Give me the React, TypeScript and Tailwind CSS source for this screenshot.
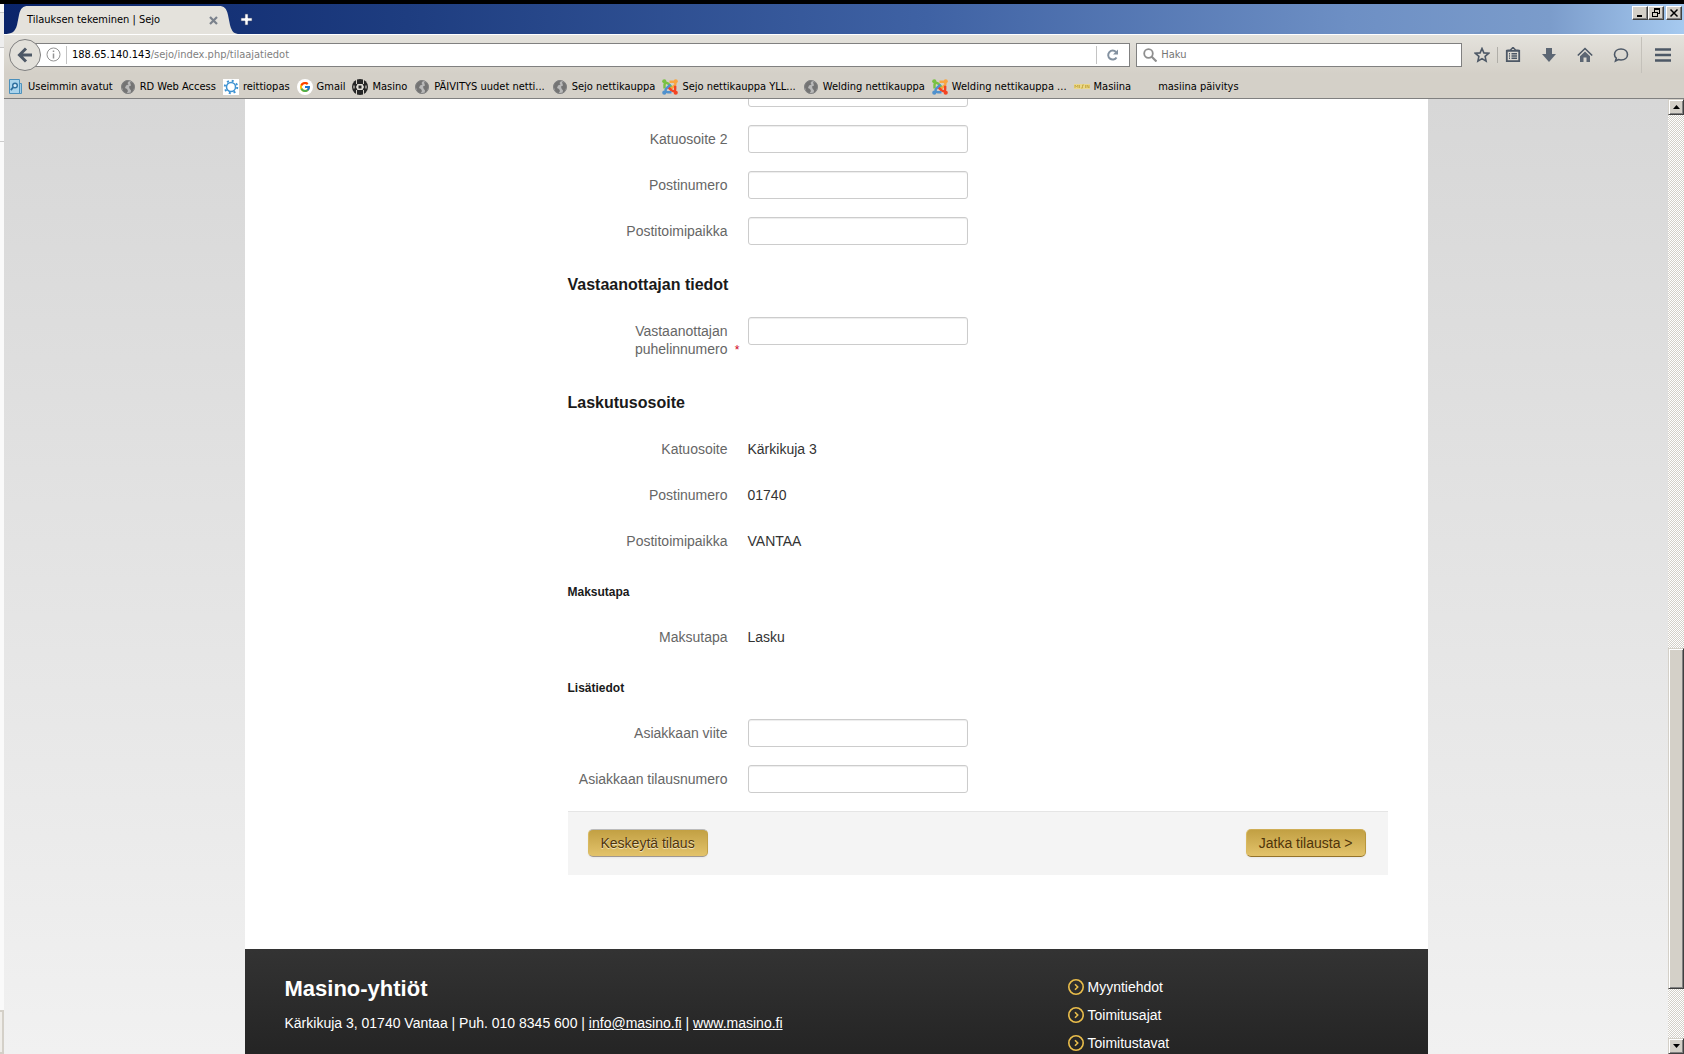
import type { ReactNode } from 'react';
import { FcGoogle } from 'react-icons/fc';

const uiFont = "font-['DejaVu_Sans_Condensed','Noto_Sans',sans-serif]";

function GlobeIcon() {
  return (
    <svg width="16" height="16" viewBox="0 0 16 16" aria-hidden="true">
      <circle cx="8" cy="8" r="7" fill="#b9b9b9" />
      <path d="M1.500 7 3 3.500 6.500 1.500 9 2 7.500 4l1 1.500L6 6.500 5 9l2 1 1 2-1.500 2.500L3.500 13 2.500 10zM10 3l3 .5 1.500 3-.5 3-1.500 3.500-2 1.500.5-3-1.500-2-.5-2L11 6.500z" fill="#747474" />
      <circle cx="8" cy="8" r="6.500" fill="none" stroke="#808080" />
    </svg>
  );
}

function JoomlaIcon() {
  return (
    <svg width="16" height="16" viewBox="0 0 16 16" fill="none" strokeWidth="2.400" aria-hidden="true">
      <path d="M2.500 9.500V5.800c0-1.800 2.300-2.500 3.700-1.200L10.500 9" stroke="#7ac143" />
      <path d="M7.500 2.800h3.700c1.800 0 3 2 1.800 3.300l-4.700 4.400" stroke="#f9a541" />
      <path d="M13.200 6.800v3.400c0 1.900-2.300 2.600-3.700 1.200L5.500 7.300" stroke="#f44321" />
      <path d="M9.500 13.200H5.800C4 13.200 2.800 11.200 4 9.900l4.500-4.400" stroke="#5091cd" />
      <circle cx="2.300" cy="2.300" r="2.100" fill="#7ac143" />
      <circle cx="13.700" cy="2.300" r="2.100" fill="#f9a541" />
      <circle cx="13.700" cy="13.700" r="2.100" fill="#f44321" />
      <circle cx="2.300" cy="13.700" r="2.100" fill="#5091cd" />
    </svg>
  );
}

function MostVisitedIcon() {
  return (
    <svg width="16" height="16" viewBox="0 0 16 16" aria-hidden="true">
      <path d="M4 4.500h9.500v10H3z" fill="#9fcbe6" stroke="#4f93bd" />
      <path d="M1.500.5h10v14h-10z" fill="#a9d3ec" stroke="#4a8fbb" />
      <circle cx="7" cy="6.500" r="2.300" fill="#d9eefa" stroke="#2f6f9f" strokeWidth="1.400" />
      <path d="m5.300 8.200-2.500 3" stroke="#2f6f9f" strokeWidth="1.800" />
    </svg>
  );
}

function ReittiopasIcon() {
  return (
    <svg width="16" height="16" viewBox="0 0 16 16" aria-hidden="true">
      <path d="M0 0h16v16H0z" fill="#fff" />
      <circle cx="8" cy="8" r="4.500" fill="none" stroke="#3f93d2" strokeWidth="1.500" />
      <circle cx="8" cy="8" r="6.200" fill="none" stroke="#3f93d2" strokeWidth="2" strokeDasharray="2 2.870" />
    </svg>
  );
}

function MasinoIcon() {
  return (
    <svg width="16" height="16" viewBox="0 0 16 16" aria-hidden="true">
      <circle cx="8" cy="8" r="8" fill="#262626" />
      <path d="M4.500 0v5M4.500 11v5M11.500 0v5M11.500 11v5" stroke="#d4d0c8" />
      <path d="M2 6.500v3M14 6.500v3" stroke="#d4d0c8" strokeWidth="1.200" />
      <path d="M5.500 5h5L12 8l-1.500 3h-5L4 8z" fill="#e4e1da" />
      <path d="M6.500 6.500h3v3h-3z" fill="#262626" />
    </svg>
  );
}

function MasiinaIcon() {
  return (
    <svg width="16" height="16" viewBox="0 0 16 16" aria-hidden="true">
      <path d="M0 5h16v5H0z" fill="#ead78a" />
      <path d="M1 9V6l1.500 2L4 6v3M5.500 9V6M7 9h1.500V6H10M11.500 6v3M13 9V6l2 3V6" stroke="#c3a53c" fill="none" strokeWidth=".8" />
    </svg>
  );
}

const bookmarks: { label: string; icon: ReactNode }[] = [
  { label: 'Useimmin avatut', icon: <MostVisitedIcon /> },
  { label: 'RD Web Access', icon: <GlobeIcon /> },
  { label: 'reittiopas', icon: <ReittiopasIcon /> },
  { label: 'Gmail', icon: <span className="block rounded-full bg-white p-0.5"><FcGoogle size={12} /></span> },
  { label: 'Masino', icon: <MasinoIcon /> },
  { label: 'PÄIVITYS uudet netti...', icon: <GlobeIcon /> },
  { label: 'Sejo nettikauppa', icon: <GlobeIcon /> },
  { label: 'Sejo nettikauppa YLL...', icon: <JoomlaIcon /> },
  { label: 'Welding nettikauppa', icon: <GlobeIcon /> },
  { label: 'Welding nettikauppa ...', icon: <JoomlaIcon /> },
  { label: 'Masiina', icon: <MasiinaIcon /> },
  { label: 'masiina päivitys', icon: null },
];

function WindowButton({ label, children }: { label: string; children: ReactNode }) {
  return (
    <button
      type="button"
      aria-label={label}
      className="flex h-3.5 w-4 items-center justify-center border border-t-white border-r-[#404040] border-b-[#404040] border-l-white bg-[#d4d0c8] shadow-[inset_-1px_-1px_0_#808080]"
    >
      <svg width="10" height="10" viewBox="0 0 10 10" fill="none" stroke="#000" shapeRendering="crispEdges" aria-hidden="true">
        {children}
      </svg>
    </button>
  );
}

function TitleBar() {
  return (
    <div className="flex h-[30px] items-end justify-between bg-[linear-gradient(90deg,#0a246a_0%,#1e3d80_24%,#3f62a4_55%,#6d8fc4_80%,#7b9ccb_92%,#a6caf0_100%)]">
      <div className="flex items-end">
        <div className="relative flex h-7 w-[236px] items-center">
          <svg width="236" height="28" viewBox="0 0 236 28" className="absolute inset-0" aria-hidden="true">
            <path d="M0 28c8 0 11-2 13-9l2-10c1.500-7 4-9 9-9h191c5 0 7.500 2 9 9l2 10c2 7 4 9 10 9z" fill="#e4e2dc" />
          </svg>
          <span className="relative flex-1 pl-[23px] text-[11px] leading-4 text-black">Tilauksen tekeminen | Sejo</span>
          <button type="button" aria-label="Sulje välilehti" className="relative mr-[22px]">
            <svg width="9" height="9" viewBox="0 0 9 9" stroke="#7b828c" strokeWidth="2.200" aria-hidden="true">
              <path d="m1 1 7 7M8 1 1 8" />
            </svg>
          </button>
        </div>
        <button type="button" aria-label="Uusi välilehti" className="mb-2">
          <svg width="13" height="13" viewBox="0 0 13 13" aria-hidden="true">
            <path d="M5 1h3v4h4v3H8v4H5V8H1V5h4z" fill="#fff" stroke="#3c4c70" strokeWidth=".6" />
          </svg>
        </button>
      </div>
      <div className="flex self-start pt-0.5 pr-0.5">
        <WindowButton label="Pienennä">
          <path d="M2 8h5" strokeWidth="2" />
        </WindowButton>
        <WindowButton label="Palauta">
          <path d="M3.500 3.500v-3h5v5h-2M3 1h6M1.500 4.500h5v4h-5zM1 4h6" />
        </WindowButton>
        <div className="w-0.5" />
        <WindowButton label="Sulje">
          <path d="m1.500 1.500 7 7M8.500 1.500l-7 7" strokeWidth="1.500" shapeRendering="auto" />
        </WindowButton>
      </div>
    </div>
  );
}

function ToolButton({ label, children }: { label: string; children: ReactNode }) {
  return (
    <button type="button" aria-label={label} className="flex size-4 items-center justify-center">
      <svg width="16" height="16" viewBox="0 0 16 16" fill="none" stroke="#4d5866" strokeWidth="1.600" aria-hidden="true">
        {children}
      </svg>
    </button>
  );
}

function NavBar() {
  return (
    <div className="flex h-10 items-center border-t border-white bg-linear-to-b from-[#e4e2dc] to-[#d4d0c8] pl-[5px]">
      <button
        type="button"
        aria-label="Takaisin"
        className="z-10 flex size-8 shrink-0 items-center justify-center rounded-full border border-[#808080] bg-[#e2e0da]"
      >
        <svg width="16" height="16" viewBox="0 0 16 16" fill="none" stroke="#4d5866" strokeWidth="3" aria-hidden="true">
          <path d="M15 8H3M9 1.500 2.500 8 9 14.500" />
        </svg>
      </button>
      <div className="-ml-1.5 flex h-6 flex-[1098] items-center border border-[#808080] bg-white pl-2.5">
        <svg width="15" height="15" viewBox="0 0 15 15" fill="none" stroke="#949494" aria-hidden="true">
          <circle cx="7.500" cy="7.500" r="6.500" />
          <path d="M7.500 3.500v1.500M7.500 6.500v5" strokeWidth="1.500" />
        </svg>
        <div className="mx-[5px] h-[18px] w-px bg-[#c4c4c4]" />
        <div className="flex-1 text-[11px] leading-4 text-[#808080]" role="textbox" aria-label="Osoite">
          <span className="text-black">188.65.140.143</span>/sejo/index.php/tilaajatiedot
        </div>
        <div className="h-[18px] w-px bg-[#c4c4c4]" />
        <button type="button" aria-label="Päivitä" className="mx-2.5">
          <svg width="12" height="12" viewBox="0 0 12 12" fill="none" stroke="#8391a0" strokeWidth="2" aria-hidden="true">
            <path d="M9.500 8.500A4.500 4.500 0 1 1 9 3" />
            <path d="M11 .5v5H6z" fill="#8391a0" stroke="none" />
          </svg>
        </button>
      </div>
      <label className="ml-1.5 flex h-6 flex-[322] items-center gap-1 border border-[#808080] bg-white pl-1.5">
        <svg width="14" height="14" viewBox="0 0 14 14" fill="none" stroke="#8e8e8e" strokeWidth="1.800" className="shrink-0" aria-hidden="true">
          <circle cx="5.500" cy="5.500" r="4.300" />
          <path d="m8.500 8.500 5 5" strokeWidth="2.200" />
        </svg>
        <input type="search" aria-label="Haku" placeholder="Haku" className="w-full min-w-0 text-[11px] leading-4 outline-none placeholder:text-[#757575]" />
      </label>
      <div className="flex shrink-0 items-center pl-3">
        <ToolButton label="Lisää kirjanmerkki">
          <path d="m8 1.500 1.900 4.400 4.700.4-3.500 3.100 1 4.700L8 11.600l-4.100 2.500 1-4.700-3.500-3.100 4.700-.4z" />
        </ToolButton>
        <div className="mx-[7px] h-4 w-px bg-[#b0aea8]" />
        <div className="flex items-center gap-5">
          <ToolButton label="Kirjanmerkit">
            <path d="M1.800 3.800h12.400v10.400H1.800z" strokeWidth="1.800" />
            <path d="M1.500 3.500 5.500 3l2.500-2.500L10.500 3l4 .5M4 6.800h1M6.500 6.800H12M4 9h1M6.500 9H12M4 11.300h1M6.500 11.300H12" />
          </ToolButton>
          <ToolButton label="Lataukset">
            <path d="M5 1h6v6h4l-7 8-7-8h4z" fill="#5c6673" stroke="none" />
          </ToolButton>
          <ToolButton label="Koti">
            <path d="m.8 8.500 7.200-7 7.200 7" />
            <path d="M3 9.200 8 4.400l5 4.800V15H9.500v-4.500h-3V15H3z" fill="#5c6673" stroke="none" />
          </ToolButton>
          <ToolButton label="Keskustelu">
            <path d="M8 2c3.800 0 6.500 2.300 6.500 5.500S11.800 13 8 13c-1 0-1.800-.1-2.600-.4L2.500 14l.8-2.800C2.100 10.200 1.500 9 1.500 7.500 1.500 4.300 4.200 2 8 2z" />
          </ToolButton>
        </div>
        <div className="ml-3 h-9 w-px bg-[#c4c1ba]" />
        <div className="px-[13px]">
          <ToolButton label="Valikko">
            <path d="M0 2.500h16M0 8h16M0 13.500h16" strokeWidth="2.600" />
          </ToolButton>
        </div>
      </div>
    </div>
  );
}

function BookmarksBar() {
  return (
    <nav className="flex h-[25px] items-center gap-[7px] border-b border-[#808080] bg-[#d4d0c8] pt-0.5 pl-1">
      {bookmarks.map((item) => (
        <a key={item.label} href="#" className="flex items-center gap-1 whitespace-nowrap text-[11px] leading-4 text-black">
          <span className="size-4 shrink-0">{item.icon}</span>
          {item.label}
        </a>
      ))}
    </nav>
  );
}

function ScrollBar() {
  const face =
    'w-4 border border-t-[#d4d0c8] border-r-[#404040] border-b-[#404040] border-l-[#d4d0c8] bg-[#d4d0c8] shadow-[inset_1px_1px_0_#fff,inset_-1px_-1px_0_#808080]';
  return (
    <div className="flex w-4 shrink-0 flex-col bg-[#d4d0c8] bg-[conic-gradient(#fff_25%,#d4d0c8_0_50%,#fff_0_75%,#d4d0c8_0)] bg-size-[2px_2px]">
      <button type="button" aria-label="Vieritä ylös" className={`${face} flex h-4 items-center justify-center`}>
        <svg width="7" height="4" viewBox="0 0 7 4" aria-hidden="true">
          <path d="M3.500 0 7 4H0z" />
        </svg>
      </button>
      <div className="flex-[534]" />
      <div className={`${face} flex-[339]`} />
      <div className="flex-[49]" />
      <button type="button" aria-label="Vieritä alas" className={`${face} flex h-4 items-center justify-center`}>
        <svg width="7" height="4" viewBox="0 0 7 4" aria-hidden="true">
          <path d="M0 0h7L3.500 4z" />
        </svg>
      </button>
    </div>
  );
}

function TextRow({ id, label, required }: { id: string; label: string; required?: boolean }) {
  return (
    <div className={required ? 'mb-[23px] flex gap-5' : 'mb-[18px] flex gap-5'}>
      <label htmlFor={id} className="relative flex w-40 justify-end pt-[5px] text-right text-[#666]">
        <span className={required ? 'w-[94px]' : ''}>{label}</span>
        {required && <span className="absolute -right-3 bottom-0 text-xs leading-4 text-[#d0021b]">*</span>}
      </label>
      <input
        id={id}
        type="text"
        className="h-7 w-[220px] rounded-[3px] border border-[#ccc] bg-white px-1.5 shadow-[inset_0_1px_1px_rgba(0,0,0,0.075)] outline-none"
      />
    </div>
  );
}

function ValueRow({ label, value }: { label: string; value: string }) {
  return (
    <dl className="mb-[18px] flex h-7 gap-5 pt-[5px]">
      <dt className="w-40 text-right text-[#666]">{label}</dt>
      <dd className="text-[#333]">{value}</dd>
    </dl>
  );
}

function Heading({ children }: { children: ReactNode }) {
  return <h3 className="pt-1 pb-3.5 text-base leading-9 font-bold text-[#1a1a1a]">{children}</h3>;
}

function SubHeading({ children }: { children: ReactNode }) {
  return <h4 className="pt-px pb-[13px] text-xs leading-9 font-bold text-[#1a1a1a]">{children}</h4>;
}

function OrderForm() {
  return (
    <form className="-mt-5 pr-10 pb-[74px] pl-[323px]">
      <TextRow id="katuosoite" label="" />
      <TextRow id="katuosoite2" label="Katuosoite 2" />
      <TextRow id="postinumero" label="Postinumero" />
      <TextRow id="postitoimipaikka" label="Postitoimipaikka" />

      <Heading>Vastaanottajan tiedot</Heading>
      <TextRow id="puhelin" label="Vastaanottajan puhelinnumero" required />

      <Heading>Laskutusosoite</Heading>
      <ValueRow label="Katuosoite" value="Kärkikuja 3" />
      <ValueRow label="Postinumero" value="01740" />
      <ValueRow label="Postitoimipaikka" value="VANTAA" />

      <SubHeading>Maksutapa</SubHeading>
      <ValueRow label="Maksutapa" value="Lasku" />

      <SubHeading>Lisätiedot</SubHeading>
      <TextRow id="viite" label="Asiakkaan viite" />
      <TextRow id="tilausnumero" label="Asiakkaan tilausnumero" />

      <div className="flex justify-between border-t border-[#e5e5e5] bg-[#f4f4f4] pt-[17px] pr-[22px] pb-[18px] pl-5">
        <button
          type="button"
          className="h-7 rounded-[5px] border border-t-[#bbb] border-r-[#c2a046] border-b-[#a09890] border-l-[#d9b95f] bg-linear-to-b from-[#c2a043] to-[#e3c36b] px-3 text-[#4f3409] shadow-[0_1px_2px_rgba(0,0,0,0.05)] [text-shadow:0_1px_1px_rgba(255,255,255,0.75)]"
        >
          Keskeytä tilaus
        </button>
        <button
          type="submit"
          className="h-7 rounded-[5px] border border-t-[#cfae57] border-r-[#b8963c] border-b-[#94732a] border-l-[#d9b95f] bg-linear-to-b from-[#c2a043] to-[#e3c36b] px-3 text-[#4f3409] shadow-[0_1px_2px_rgba(0,0,0,0.05)]"
        >
          Jatka tilausta &gt;
        </button>
      </div>
    </form>
  );
}

function Footer() {
  return (
    <footer className="flex flex-1 bg-linear-to-b from-[#333] to-[#242424] pr-10 pl-10 text-white">
      <div className="flex-1 pt-[26px]">
        <h2 className="text-[22px] leading-7 font-bold">Masino-yhtiöt</h2>
        <p className="mt-[11px]">
          Kärkikuja 3, 01740 Vantaa | Puh. 010 8345 600 |{' '}
          <a href="mailto:info@masino.fi" className="underline">info@masino.fi</a> |{' '}
          <a href="#" className="underline">www.masino.fi</a>
        </p>
      </div>
      <ul className="w-80 pt-6">
        {['Myyntiehdot', 'Toimitusajat', 'Toimitustavat'].map((item) => (
          <li key={item} className="flex h-7 items-center">
            <a href="#" className="flex items-center gap-1">
              <svg width="16" height="16" viewBox="0 0 16 16" fill="none" stroke="#e9bd4b" strokeWidth="1.600" aria-hidden="true">
                <circle cx="8" cy="8" r="7.200" />
                <path d="m7 5.300 2.700 2.700L7 10.700" />
              </svg>
              {item}
            </a>
          </li>
        ))}
      </ul>
    </footer>
  );
}

export default function App() {
  return (
    <div className="flex h-screen flex-col overflow-hidden bg-white">
      <div className="h-1 shrink-0 bg-black" />
      <div className="flex min-h-0 flex-1">
        {/* sliver of the window behind this one */}
        <div className="flex w-1 shrink-0 flex-col bg-[#fafafa]">
          <div className="h-2" />
          <div className="h-9 border-y border-[#c8c8c8] bg-[#eee]" />
          <div className="h-[94px] border-b border-[#ccc]" />
          <div className="mt-auto h-11 border-2 border-l-0 border-[#d4d0c8] bg-[#f0eeea]" />
        </div>
        <div className="flex min-w-0 flex-1 flex-col">
          <header className={`${uiFont} shrink-0`}>
            <TitleBar />
            <NavBar />
            <BookmarksBar />
          </header>
          <div className="flex min-h-0 flex-1">
            <main className="min-w-0 flex-1 overflow-hidden bg-linear-to-b from-[#d7d7d7] to-[#f1f1f1] font-['Liberation_Sans',Arial,sans-serif] text-sm leading-[18px]">
              <div className="mx-auto flex h-full max-w-[1183px] flex-col overflow-hidden bg-white">
                <OrderForm />
                <Footer />
              </div>
            </main>
            <ScrollBar />
          </div>
        </div>
      </div>
    </div>
  );
}
